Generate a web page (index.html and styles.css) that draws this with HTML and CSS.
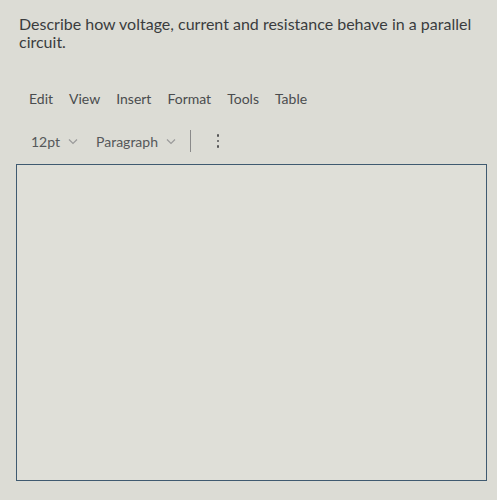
FILE: index.html
```html
<!DOCTYPE html>
<html>
<head>
<meta charset="utf-8">
<link rel="stylesheet" href="styles.css">
</head>
<body>
<div class="page">
  <p class="question">Describe how voltage, current and resistance behave in a parallel circuit.</p>
  <div class="menubar">
    <span>Edit</span><span>View</span><span>Insert</span><span>Format</span><span>Tools</span><span>Table</span>
  </div>
  <div class="toolbar">
    <span class="drop">12pt <svg width="10" height="7" viewBox="0 0 10 7"><path d="M1 1.5 L5 5.5 L9 1.5" fill="none" stroke="#9a9a9a" stroke-width="1.2"/></svg></span>
    <span class="drop para">Paragraph <svg width="10" height="7" viewBox="0 0 10 7"><path d="M1 1.5 L5 5.5 L9 1.5" fill="none" stroke="#9a9a9a" stroke-width="1.2"/></svg></span>
    <span class="sep"></span>
    <span class="more"><i></i><i></i><i></i></span>
  </div>
  <div class="editor"></div>
</div>
</body>
</html>
```
FILE: styles.css
```css
html, body {
  margin: 0;
  padding: 0;
  background: #dcdcd5;
}
.page {
  width: 497px;
  height: 500px;
  padding: 15px 0 0 19px;
  box-sizing: border-box;
  font-family: Lato, "Open Sans", sans-serif;
  color: #3a3c3e;
  overflow: hidden;
}
.question {
  margin: 0;
  width: 470px;
  font-size: 16px;
  line-height: 18px;
}
.menubar {
  display: flex;
  gap: 16px;
  margin: 40px 0 0 10px;
  font-size: 14px;
  line-height: 16px;
  color: #4a4c4e;
}
.toolbar {
  display: flex;
  align-items: center;
  margin: 22px 0 0 12px;
  height: 24px;
  font-size: 14px;
  color: #55585a;
}
.drop {
  display: flex;
  align-items: center;
  gap: 8px;
}
.para {
  margin-left: 18px;
}
.sep {
  width: 1px;
  height: 22px;
  background: #8a8a8a;
  margin-left: 14px;
}
.more {
  display: flex;
  flex-direction: column;
  gap: 3px;
  margin-left: 26px;
}
.more i {
  width: 2.5px;
  height: 2.5px;
  border-radius: 50%;
  background: #555;
  display: block;
}
.editor {
  margin: 11px 0 0 -3px;
  width: 471px;
  height: 317px;
  border: 1.5px solid #3f5a70;
  box-sizing: border-box;
  background: #dfdfd8;
}
```
